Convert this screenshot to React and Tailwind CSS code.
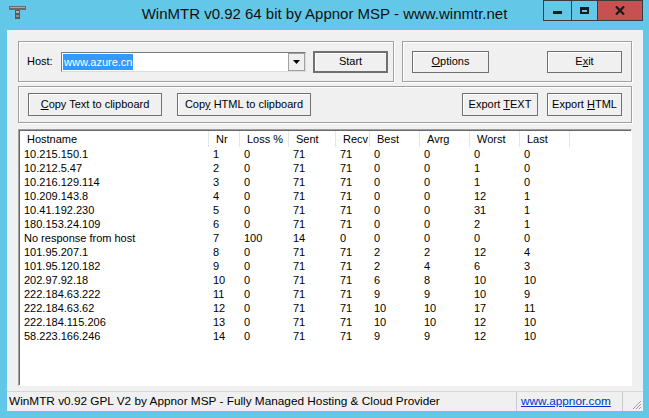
import React from 'react';

const hops = [
  ['10.215.150.1', 1, 0, 71, 71, 0, 0, 0, 0],
  ['10.212.5.47', 2, 0, 71, 71, 0, 0, 1, 0],
  ['10.216.129.114', 3, 0, 71, 71, 0, 0, 1, 0],
  ['10.209.143.8', 4, 0, 71, 71, 0, 0, 12, 1],
  ['10.41.192.230', 5, 0, 71, 71, 0, 0, 31, 1],
  ['180.153.24.109', 6, 0, 71, 71, 0, 0, 2, 1],
  ['No response from host', 7, 100, 14, 0, 0, 0, 0, 0],
  ['101.95.207.1', 8, 0, 71, 71, 2, 2, 12, 4],
  ['101.95.120.182', 9, 0, 71, 71, 2, 4, 6, 3],
  ['202.97.92.18', 10, 0, 71, 71, 6, 8, 10, 10],
  ['222.184.63.222', 11, 0, 71, 71, 9, 9, 10, 9],
  ['222.184.63.62', 12, 0, 71, 71, 10, 10, 17, 11],
  ['222.184.115.206', 13, 0, 71, 71, 10, 10, 12, 10],
  ['58.223.166.246', 14, 0, 71, 71, 9, 9, 12, 10],
];

const columns = [
  ['Hostname', 'w-[189px]'],
  ['Nr', 'w-[31px]'],
  ['Loss %', 'w-[49px]'],
  ['Sent', 'w-[47px]'],
  ['Recv', 'w-[34px]'],
  ['Best', 'w-[50px]'],
  ['Avrg', 'w-[50px]'],
  ['Worst', 'w-[50px]'],
  ['Last', 'w-[50px]'],
];

const ui = { fontFamily: '"Liberation Sans", Arial, sans-serif' };

function Btn({ className = '', children }) {
  return (
    <div
      className={`flex items-center justify-center bg-[#f0f0f0] border border-[#707070] shadow-[inset_1px_1px_0_#fff] text-[11px] text-black leading-none ${className}`}
    >
      <span>{children}</span>
    </div>
  );
}

function Group({ className = '', children }) {
  return (
    <div className={`border border-[#a0a0a0] shadow-[inset_1px_1px_0_#fff,1px_1px_0_#fff] ${className}`}>
      {children}
    </div>
  );
}

export default function App() {
  return (
    <div className="w-[649px] h-[418px] bg-[#63c8e8] flex flex-col overflow-hidden" style={ui}>
      {/* Title bar */}
      <div className="relative h-[30px] flex items-center justify-center">
        <svg className="absolute left-[9px] top-[6px]" width="18" height="14" viewBox="0 0 18 14">
          <rect x="0" y="0" width="17" height="4" fill="#6b6b6b" />
          <rect x="1" y="1" width="15" height="1" fill="#a8a8a8" />
          <rect x="6" y="4" width="5" height="9" fill="#5a5a5a" />
          <rect x="7" y="5" width="3" height="2" fill="#b0b0b0" />
          <rect x="7" y="9" width="3" height="2" fill="#909090" />
        </svg>
        <span className="text-[15px] text-[#111] mt-[-2px]">WinMTR v0.92 64 bit by Appnor MSP - www.winmtr.net</span>
        <div className="absolute right-[6px] top-0 flex h-[21px]">
          <div className="w-[29px] border border-[#3b3b3b] flex items-center justify-center">
            <div className="w-[9px] h-[3px] bg-[#1a1a1a] mt-[3px]" />
          </div>
          <div className="w-[26px] border-y border-r border-[#3b3b3b] flex items-center justify-center">
            <div className="w-[9px] h-[7px] border-[2px] border-t-[3px] border-[#1a1a1a]" />
          </div>
          <div className="w-[45px] border-y border-r border-[#3b3b3b] bg-[#c75050] flex items-center justify-center">
            <svg width="10" height="9" viewBox="0 0 10 9">
              <path d="M1 0.5 L9 8.5 M9 0.5 L1 8.5" stroke="#1a1a1a" strokeWidth="2.2" />
            </svg>
          </div>
        </div>
      </div>

      {/* Client area */}
      <div className="mx-[7px] w-[636px] h-[381px] bg-[#f0f0f0] flex flex-col">
        <div className="px-[11px] pt-[11px] flex flex-col">
          {/* Row 1 */}
          <div className="flex gap-[8px] h-[41px]">
            <Group className="w-[376px] flex items-center pl-[8px]">
              <span className="text-[11px] w-[34px]">Host:</span>
              <div className="w-[245px] h-[20px] bg-white border border-[#7a7a7a] border-r-[#dcdcdc] border-b-[#dcdcdc] flex items-center pl-[1px]">
                <span className="bg-[#3399ff] text-white text-[11px] leading-[16px] px-[1px] h-[16px]">www.azure.cn</span>
                <div className="ml-auto w-[17px] h-[18px] border border-[#a0a0a0] bg-[#f0f0f0] flex items-center justify-center">
                  <svg width="7" height="4" viewBox="0 0 7 4">
                    <path d="M0 0 H7 L3.5 4 Z" fill="#000" />
                  </svg>
                </div>
              </div>
              <Btn className="ml-[7px] w-[75px] h-[22px] border-2 border-[#666]">Start</Btn>
            </Group>
            <Group className="flex-1 flex items-center justify-between px-[9px]">
              <Btn className="w-[77px] h-[22px]">
                <span className="underline">O</span>ptions
              </Btn>
              <Btn className="w-[75px] h-[22px]">
                E<span className="underline">x</span>it
              </Btn>
            </Group>
          </div>

          {/* Row 2 */}
          <Group className="mt-[4px] h-[37px] flex items-center px-[9px]">
            <Btn className="w-[134px] h-[23px]">
              <span className="underline">C</span>opy Text to clipboard
            </Btn>
            <Btn className="ml-[15px] w-[134px] h-[23px]">
              Cop<span className="underline">y</span> HTML to clipboard
            </Btn>
            <Btn className="ml-auto w-[76px] h-[23px]">
              Export <span className="underline">T</span>EXT
            </Btn>
            <Btn className="ml-[9px] w-[75px] h-[23px]">
              Export <span className="underline">H</span>TML
            </Btn>
          </Group>

          {/* List */}
          <div className="mt-[6px] h-[257px] bg-white border border-[#a0a0a0] border-r-white border-b-white shadow-[inset_1px_1px_0_#696969] pl-[1px] pt-[1px] text-[11px]">
            <div className="flex h-[16px] items-center">
              {columns.map(([label, w]) => (
                <div key={label} className={`${w} h-full pl-[7px] flex items-center border-r border-[#e5e5e5]`}>
                  {label}
                </div>
              ))}
            </div>
            {hops.map((row) => (
              <div key={row[1]} className="flex h-[14px] items-center leading-[14px]">
                {row.map((cell, i) => (
                  <div key={i} className={`${columns[i][1]} pl-[4px]`}>
                    {cell}
                  </div>
                ))}
              </div>
            ))}
          </div>
        </div>

        {/* Status bar */}
        <div className="mt-auto h-[20px] flex items-stretch border-t border-[#d7d7d7] text-[11.8px]">
          <div className="w-[510px] flex items-center pl-[2px] border-r border-[#c8c8c8]">
            WinMTR v0.92 GPL V2 by Appnor MSP - Fully Managed Hosting &amp; Cloud Provider
          </div>
          <div className="w-[106px] flex items-center pl-[4px] border-r border-[#c8c8c8] text-[#0033cc] underline">
            www.appnor.com
          </div>
          <div className="flex-1 flex items-end justify-end pr-[1px] pb-[1px]">
            <svg width="12" height="12" viewBox="0 0 12 12">
              <path d="M11 3 L3 11 M11 6 L6 11 M11 9 L9 11" stroke="#a0a0a0" strokeWidth="1" />
            </svg>
          </div>
        </div>
      </div>
    </div>
  );
}
